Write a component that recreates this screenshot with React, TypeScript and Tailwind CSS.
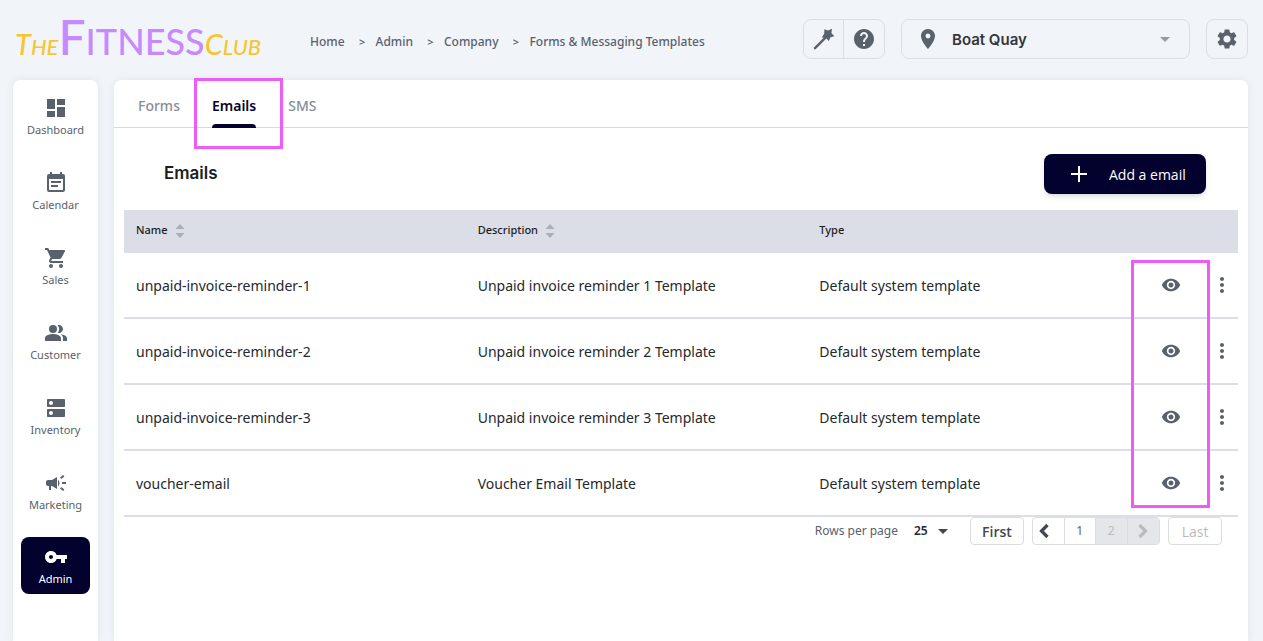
import type { ReactNode } from "react";
import {
  MdArrowDropDown,
  MdCampaign,
  MdDashboard,
  MdDns,
  MdEventNote,
  MdHelp,
  MdMoreVert,
  MdPeopleAlt,
  MdPlace,
  MdSettings,
  MdShoppingCart,
  MdVisibility,
  MdVpnKey,
} from "react-icons/md";

const navItems: { label: string; icon: ReactNode; active?: boolean }[] = [
  { label: "Dashboard", icon: <MdDashboard size={24} /> },
  { label: "Calendar", icon: <MdEventNote size={24} /> },
  { label: "Sales", icon: <MdShoppingCart size={24} /> },
  { label: "Customer", icon: <MdPeopleAlt size={24} /> },
  { label: "Inventory", icon: <MdDns size={24} /> },
  { label: "Marketing", icon: <MdCampaign size={24} /> },
  { label: "Admin", icon: <MdVpnKey size={24} />, active: true },
];

const crumbs = ["Home", "Admin", "Company", "Forms & Messaging Templates"];

const rows = [
  { name: "unpaid-invoice-reminder-1", description: "Unpaid invoice reminder 1 Template" },
  { name: "unpaid-invoice-reminder-2", description: "Unpaid invoice reminder 2 Template" },
  { name: "unpaid-invoice-reminder-3", description: "Unpaid invoice reminder 3 Template" },
  { name: "voucher-email", description: "Voucher Email Template" },
];

function Logo() {
  return (
    <a
      href="#home"
      className="flex w-[294px] shrink-0 items-baseline pb-1.5 pl-[15px] font-['Lato',sans-serif] leading-none font-medium whitespace-nowrap"
    >
      <span className="text-[29px] text-[#f7c52f] italic">T</span>
      <span className="text-[22px] text-[#f7c52f] italic">HE</span>
      <span className="text-[48px] text-[#c68afd]">F</span>
      <span className="text-[36px] text-[#c68afd]">ITNESS</span>
      <span className="text-[29px] text-[#f7c52f] italic">C</span>
      <span className="text-[22px] text-[#f7c52f] italic">LUB</span>
    </a>
  );
}

function WandIcon() {
  return (
    <svg width="22" height="22" viewBox="0 0 22 22" aria-hidden="true">
      <path d="M2 20.2 13.5 8.7" stroke="currentColor" strokeWidth="2.4" strokeLinecap="round" />
      <path
        d="M11.4 1.2 15 2.6 19 .8 18.4 4.9 21.4 8.2 17.5 9.2 15.8 13 13.1 10 8.7 9.4 11.2 5.8Z"
        fill="currentColor"
      />
    </svg>
  );
}

function SortIcon() {
  return (
    <svg width="10" height="14" viewBox="0 0 10 14" fill="#a9afb9" aria-hidden="true">
      <path d="M5 0 9.5 5H.5Z" />
      <path d="M5 14 .5 9h9Z" />
    </svg>
  );
}

function Chevron({ direction }: { direction: "left" | "right" }) {
  return (
    <svg width="12" height="16" viewBox="0 0 12 16" fill="none" stroke="currentColor" strokeWidth="3.2" aria-hidden="true">
      <path d={direction === "left" ? "M9.5 2 3.5 8l6 6" : "M2.5 2l6 6-6 6"} />
    </svg>
  );
}

function Header() {
  return (
    <header className="flex h-20 items-center pr-[15px] text-[#59616d]">
      <Logo />
      <nav aria-label="Breadcrumb" className="min-w-0 flex-1 pt-1 pl-4">
        <ol className="flex items-center text-xs font-medium whitespace-nowrap">
          {crumbs.map((crumb, index) => (
            <li key={crumb} className="flex items-center">
              {index > 0 && <span className="w-[31px] pl-1 text-center text-[11px] font-semibold">&gt;</span>}
              <a href={"#" + crumb.toLowerCase().replaceAll(" ", "-")}>{crumb}</a>
            </li>
          ))}
        </ol>
      </nav>
      <div className="flex items-center gap-4 pb-0.5">
        <div className="flex h-10 divide-x divide-[#dbdee6] rounded-lg border border-[#dbdee6]">
          <button type="button" aria-label="Wizard" className="flex w-10 items-center justify-center">
            <WandIcon />
          </button>
          <button type="button" aria-label="Help" className="flex w-10 items-center justify-center">
            <MdHelp size={24} />
          </button>
        </div>
        <div className="relative flex h-10 w-[289px] items-center rounded-lg border border-[#dbdee6]">
          <MdPlace size={24} className="pointer-events-none absolute left-3.5" />
          <select
            aria-label="Location"
            className="h-full w-full appearance-none pt-0.5 pr-10 pl-[50px] font-['Inter',sans-serif] text-[15px] font-semibold text-[#33363b]"
          >
            <option>Boat Quay</option>
          </select>
          <MdArrowDropDown size={24} className="pointer-events-none absolute right-3 text-[#989a9d]" />
        </div>
        <button
          type="button"
          aria-label="Settings"
          className="flex h-10 w-[42px] items-center justify-center rounded-lg border border-[#dbdee6]"
        >
          <MdSettings size={24} />
        </button>
      </div>
    </header>
  );
}

function Sidebar() {
  return (
    <nav aria-label="Main" className="w-[85px] shrink-0 rounded-t-lg bg-white px-2 pt-[7px] shadow-[0_0_8px_rgba(30,50,90,0.08)]">
      <ul className="flex flex-col gap-[18px]">
        {navItems.map((item) => (
          <li key={item.label}>
            <a
              href={"#" + item.label.toLowerCase()}
              className={
                item.active
                  ? "flex h-[57px] flex-col items-center gap-0.5 rounded-lg bg-[#03022f] pt-2 text-[11px] leading-4 text-white"
                  : "flex h-[57px] flex-col items-center gap-0.5 rounded-lg pt-[9px] text-[11px] leading-4 text-[#59616d]"
              }
            >
              {item.icon}
              {item.label}
            </a>
          </li>
        ))}
      </ul>
    </nav>
  );
}

function Tabs() {
  return (
    <div className="flex h-12 gap-8 border-b border-[#d6d9e3] pl-6 text-sm font-medium text-[#868e99]" role="tablist">
      <button type="button" role="tab" aria-selected="false" className="pb-1 pt-2">
        Forms
      </button>
      <button
        type="button"
        role="tab"
        aria-selected="true"
        className="relative h-12 pt-1 font-semibold text-[#03022f]"
      >
        Emails
        <span className="absolute inset-x-0 bottom-0 h-1 rounded-t-sm bg-[#03022f]" />
        <span className="pointer-events-none absolute -top-0.5 -right-[27px] -bottom-[21px] -left-[18px] border-3 border-[#ee5cf7]" />
      </button>
      <button type="button" role="tab" aria-selected="false" className="pb-1 pt-2">
        SMS
      </button>
    </div>
  );
}

function EmailTable() {
  return (
    <div className="relative">
      <table className="w-full table-fixed border-separate border-spacing-0 text-left">
        <thead>
          <tr className="h-[43px] bg-[#dbdee6] text-[11px] text-[#1b1d22]">
            <th className="px-3 pb-0.5 font-medium">
              <button type="button" className="flex items-center gap-[7px]">
                Name <SortIcon />
              </button>
            </th>
            <th className="px-3 pb-0.5 font-medium">
              <button type="button" className="flex items-center gap-[7px]">
                Description <SortIcon />
              </button>
            </th>
            <th className="px-3 pb-0.5 font-medium">Type</th>
            <th className="w-[89px]" aria-label="Actions" />
          </tr>
        </thead>
        <tbody>
          {rows.map((row) => (
            <tr key={row.name} className="h-[66px] text-sm text-[#25282d]">
              <td className="border-b-2 border-[#dbdee6] px-3 pt-0.5">{row.name}</td>
              <td className="border-b-2 border-[#dbdee6] px-3 pt-0.5">{row.description}</td>
              <td className="border-b-2 border-[#dbdee6] px-3 pt-0.5">Default system template</td>
              <td className="border-b-2 border-[#dbdee6]">
                <div className="flex items-center justify-between pr-1.5 text-[#59616d]">
                  <button type="button" aria-label={"Preview " + row.name} className="flex w-11 justify-center">
                    <MdVisibility size={20} />
                  </button>
                  <button type="button" aria-label={"More for " + row.name} className="flex w-5 justify-center">
                    <MdMoreVert size={24} className="shrink-0" />
                  </button>
                </div>
              </td>
            </tr>
          ))}
        </tbody>
      </table>
      <div className="pointer-events-none absolute top-[50px] right-7 h-[248px] w-[79px] border-3 border-[#ee5cf7]" />
    </div>
  );
}

function Pagination() {
  return (
    <div className="flex items-center justify-end gap-2 pr-4 text-[#43474e]">
      <div className="flex items-center pr-2 pb-px">
        <label htmlFor="rows-per-page" className="pr-4 text-xs text-[#59616d]">
          Rows per page
        </label>
        <div className="relative flex items-center">
          <select id="rows-per-page" className="w-10 appearance-none text-xs font-semibold text-[#25282d]">
            <option>25</option>
          </select>
          <MdArrowDropDown size={24} className="pointer-events-none absolute -right-px" />
        </div>
      </div>
      <button type="button" className="h-7 w-[54px] rounded border border-[#dcdddf] pt-0.5 font-['Open_Sans',sans-serif] text-sm font-semibold">
        First
      </button>
      <div className="grid h-7 w-32 grid-cols-4 divide-x divide-[#dcdddf] overflow-hidden rounded border border-[#dcdddf] text-xs">
        <button type="button" aria-label="Previous page" className="flex items-center justify-center pr-2">
          <Chevron direction="left" />
        </button>
        <button type="button" className="text-[#59616d]">
          1
        </button>
        <button type="button" disabled className="bg-[#e4e6e9] text-[#b9bbbe]">
          2
        </button>
        <button
          type="button"
          disabled
          aria-label="Next page"
          className="flex items-center justify-center bg-[#e4e6e9] text-[#b9bbbe]"
        >
          <Chevron direction="right" />
        </button>
      </div>
      <button
        type="button"
        disabled
        className="h-7 w-[54px] rounded border border-[#dcdddf] pt-0.5 font-['Open_Sans',sans-serif] text-sm font-medium text-[#b9bbbe]"
      >
        Last
      </button>
    </div>
  );
}

export default function App() {
  return (
    <div className="flex min-h-screen flex-col bg-[#f1f5f9] font-['Noto_Sans',sans-serif]">
      <Header />
      <div className="flex flex-1 gap-4 pr-[15px] pl-[13px]">
        <Sidebar />
        <main className="min-w-0 flex-1 rounded-t-lg bg-white shadow-[0_0_8px_rgba(30,50,90,0.08)]">
          <Tabs />
          <div className="px-2.5">
            <div className="flex h-[82px] items-start justify-between pt-[26px] pr-8 pl-10">
              <h1 className="pt-[7px] font-['Inter',sans-serif] text-[17px] leading-6 font-semibold text-[#1b1d22]">
                Emails
              </h1>
              <button
                type="button"
                className="flex h-10 w-[162px] items-center rounded-lg bg-[#03022f] pl-[27px] font-['Open_Sans',sans-serif] text-sm font-medium text-white shadow-md"
              >
                <svg width="16" height="16" viewBox="0 0 16 16" stroke="currentColor" strokeWidth="2" aria-hidden="true">
                  <path d="M8 0v16M0 8h16" />
                </svg>
                <span className="pt-0.5 pl-[22px]">Add a email</span>
              </button>
            </div>
            <EmailTable />
            <Pagination />
          </div>
        </main>
      </div>
    </div>
  );
}
